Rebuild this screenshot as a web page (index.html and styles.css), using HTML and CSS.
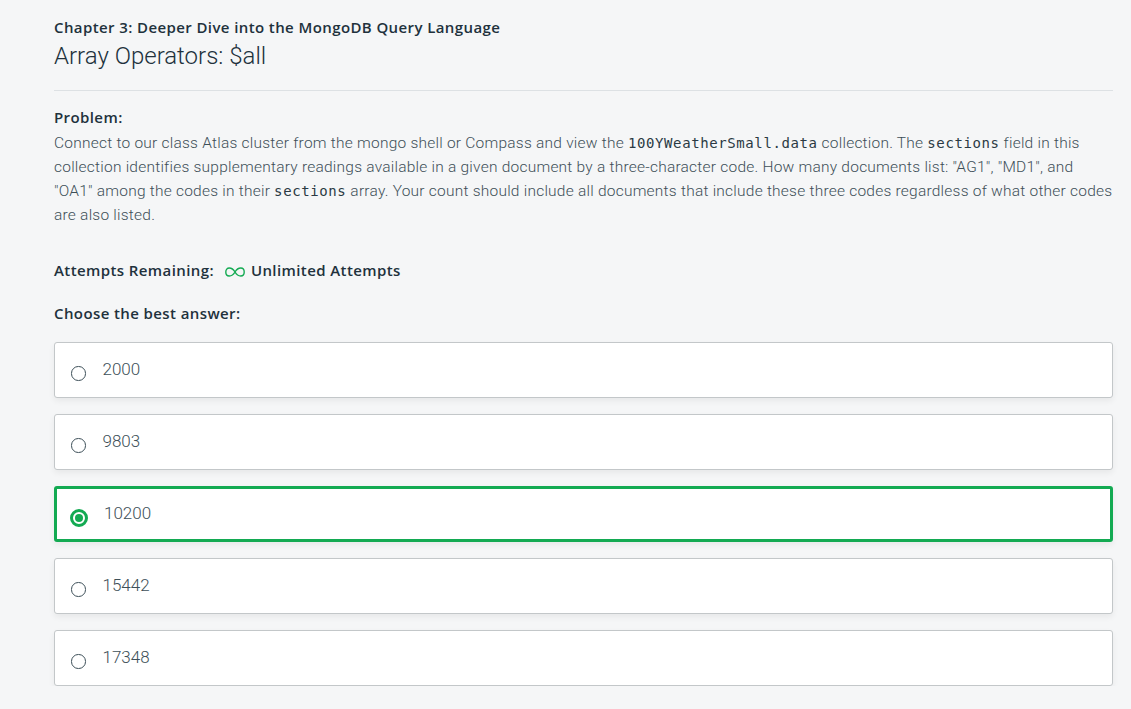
FILE: index.html
```html
<!DOCTYPE html>
<html>
<head>
<meta charset="utf-8">
<link rel="stylesheet" href="styles.css">
</head>
<body>
<main class="page">
  <header class="lesson-head">
    <div class="chapter">Chapter 3: Deeper Dive into the MongoDB Query Language</div>
    <h1 class="lesson-title">Array Operators: $all</h1>
  </header>
  <section class="problem">
    <div class="label">Problem:</div>
    <p class="body">Connect to our class Atlas cluster from the mongo shell or Compass and view the <code>100YWeatherSmall.data</code> collection. The <code>sections</code> field in this collection identifies supplementary readings available in a given document by a three-character code. How many documents list: "AG1", "MD1", and "OA1" among the codes in their <code>sections</code> array. Your count should include all documents that include these three codes regardless of what other codes are also listed.</p>
  </section>
  <div class="attempts">
    <span class="label">Attempts Remaining:</span>
    <svg class="inf" width="20" height="10" viewBox="0 0 20 10"><path d="M10 5 C8 1.5 5.5 1 4.2 1 C2.2 1 0.8 2.8 0.8 5 C0.8 7.2 2.2 9 4.2 9 C5.5 9 8 8.5 10 5 C12 1.5 14.5 1 15.8 1 C17.8 1 19.2 2.8 19.2 5 C19.2 7.2 17.8 9 15.8 9 C14.5 9 12 8.5 10 5 Z" fill="none" stroke="#13aa52" stroke-width="1.4"/></svg>
    <span class="label">Unlimited Attempts</span>
  </div>
  <div class="choose label">Choose the best answer:</div>
  <ul class="options">
    <li class="option"><span class="radio"></span><span class="val">2000</span></li>
    <li class="option"><span class="radio"></span><span class="val">9803</span></li>
    <li class="option selected"><span class="radio"></span><span class="val">10200</span></li>
    <li class="option"><span class="radio"></span><span class="val">15442</span></li>
    <li class="option"><span class="radio"></span><span class="val">17348</span></li>
  </ul>
</main>
</body>
</html>
```
FILE: styles.css
```css
html, body {
  margin: 0;
  padding: 0;
  background: #f5f6f7;
}
body {
  font-family: Roboto, "Liberation Sans", sans-serif;
  color: #21313c;
}
.page {
  padding: 16px 18px 0 54px;
}
.lesson-head {
  padding-bottom: 19px;
  border-bottom: 1px solid #dde1e4;
}
.chapter {
  font-family: "Open Sans", "Liberation Sans", sans-serif;
  font-weight: 600;
  font-size: 15px;
  letter-spacing: 0.4px;
  line-height: 22px;
  color: #21313c;
}
.lesson-title {
  margin: 3px 0 0 0;
  font-family: Roboto, sans-serif;
  font-weight: 300;
  font-size: 24px;
  line-height: 30px;
  color: #21313c;
}
.label {
  font-family: "Open Sans", "Liberation Sans", sans-serif;
  font-weight: 600;
  font-size: 15px;
  letter-spacing: 0.4px;
  color: #21313c;
}
.problem {
  padding-top: 15px;
}
.problem .label {
  line-height: 22px;
  margin-bottom: 3px;
}
.body {
  margin: 0;
  font-weight: 300;
  font-size: 15.5px;
  letter-spacing: 0.23px;
  line-height: 24px;
  color: #3d4f58;
}
code {
  font-family: "DejaVu Sans Mono", monospace;
  font-size: 14px;
  letter-spacing: 0.6px;
  color: #2b3a44;
}
.attempts {
  margin-top: 31px;
  display: flex;
  align-items: center;
  height: 24px;
}
.attempts .inf {
  margin: 3px 6px 0 11px;
}
.choose {
  margin-top: 19px;
  line-height: 24px;
}
.options {
  list-style: none;
  margin: 17px 0 0 0;
  padding: 0;
  display: flex;
  flex-direction: column;
  gap: 16px;
}
.option {
  height: 56px;
  box-sizing: border-box;
  background: #fff;
  border: 1px solid #c3c7c9;
  border-radius: 3px;
  box-shadow: 0 3px 6px rgba(0,0,0,0.06);
  display: flex;
  align-items: center;
  padding-left: 16px;
}
.option.selected {
  border: 3px solid #13aa52;
  padding-left: 13px;
}
.radio {
  width: 12.5px;
  height: 12.5px;
  border: 1.5px solid #3d4f58;
  border-radius: 50%;
  margin-top: 7px;
  position: relative;
  flex: none;
}
.selected .radio {
  width: 12px;
  height: 12px;
  border: 3px solid #13aa52;
}
.selected .radio::after {
  content: "";
  position: absolute;
  left: 2px;
  top: 2px;
  width: 8px;
  height: 8px;
  border-radius: 50%;
  background: #13aa52;
}
.val {
  margin-left: 17px;
  font-weight: 300;
  font-size: 17px;
  color: #3d4f58;
  margin-top: -2px;
}
.selected .val {
  margin-left: 16px;
}
```
